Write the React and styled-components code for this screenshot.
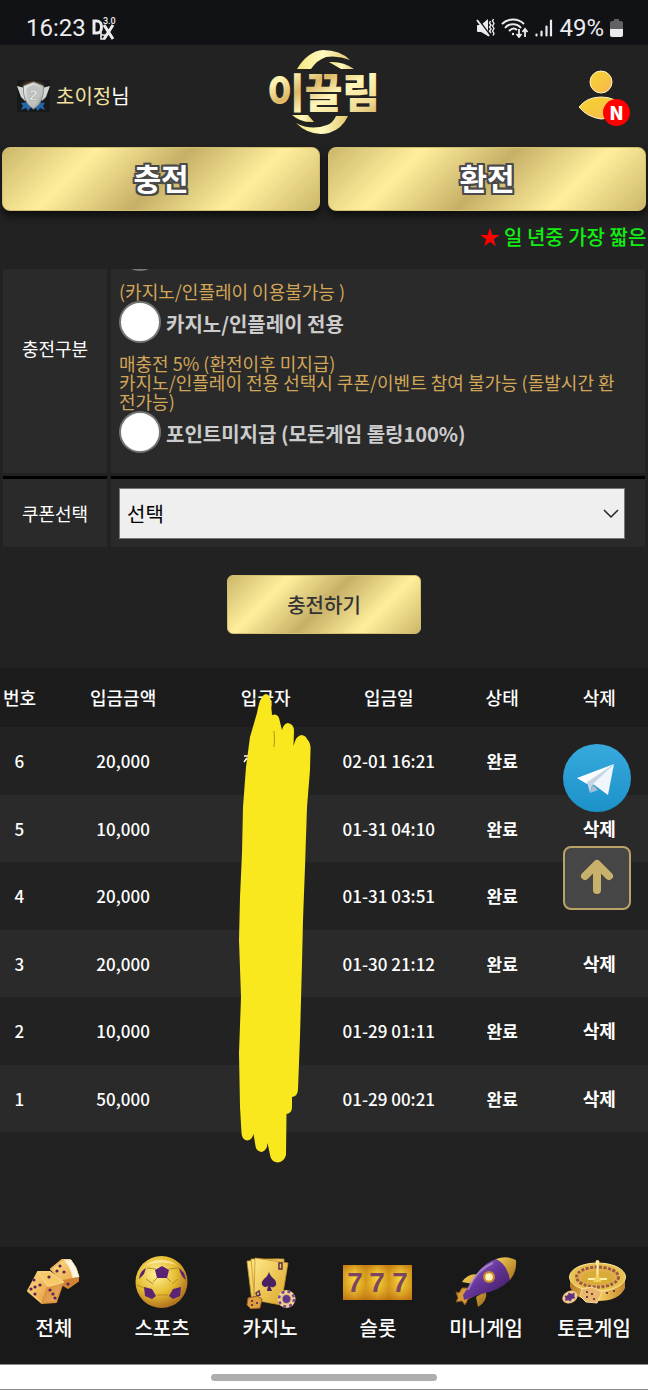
import React from "react";
import styled, { createGlobalStyle, css } from "styled-components";

const GlobalStyle = createGlobalStyle`
  *, *::before, *::after { box-sizing: border-box; }
  body {
    margin: 0;
    background: #222222;
    color: #ffffff;
    font-family: "Noto Sans CJK KR", sans-serif;
    font-size: 18px;
  }
  button, select, input { font-family: inherit; }
`;

const goldFill = css`
  background: linear-gradient(135deg, #cbb76a 0%, #ffef9c 25%, #c6b067 50%, #ffef9c 75%, #cbb76a 100%);
  border: 1px solid #d3bf72;
`;

const Screen = styled.div`
  min-height: 100vh;
  display: flex;
  flex-direction: column;
  overflow-x: hidden;
`;

/* ---------- phone status bar ---------- */

const StatusBar = styled.div`
  height: 45px;
  padding: 10px 25px 0 26px;
  display: flex;
  align-items: center;
  justify-content: space-between;
  background: #111216;
  color: #ececee;
  font-family: Roboto, sans-serif;
  font-size: 24px;
  line-height: 28px;
`;

const StatusGroup = styled.div`
  display: flex;
  align-items: center;
  gap: ${(p) => p.$gap}px;
`;

/* ---------- header ---------- */

const Header = styled.header`
  height: 102px;
  padding: 0 18px 0 16px;
  display: grid;
  grid-template-columns: 1fr auto 1fr;
  align-items: center;
`;

const Member = styled.div`
  display: flex;
  align-items: center;
  gap: 5px;
  font-size: 20px;
  line-height: 30px;
`;

const MemberName = styled.span`
  color: #f3e3a0;
`;

const LogoLink = styled.a`
  display: block;
  height: 92px;
`;

const ProfileButton = styled.button`
  position: relative;
  justify-self: end;
  width: 52px;
  height: 60px;
  padding: 0;
  border: 0;
  background: none;
`;

const NewBadge = styled.span`
  position: absolute;
  right: 0;
  bottom: 0;
  width: 27px;
  height: 27px;
  border-radius: 50%;
  background: #ff0000;
  color: #ffffff;
  font-size: 19px;
  font-weight: 900;
  line-height: 26px;
  text-align: center;
`;

/* ---------- main actions ---------- */

const ActionTabs = styled.nav`
  display: grid;
  grid-template-columns: 1fr 1fr;
  gap: 8px;
  padding: 0 2px;
`;

const ActionTab = styled.button`
  ${goldFill}
  height: 64px;
  padding: 0 0 4px;
  border-radius: 8px;
  box-shadow: 0 5px 8px rgba(0, 0, 0, 0.6);
  color: #ffffff;
  font-size: 30px;
  font-weight: 700;
  line-height: 44px;
  text-shadow: -2px -2px 0 #4a4a4a, 0 -2px 0 #4a4a4a, 2px -2px 0 #4a4a4a, -2px 0 0 #4a4a4a,
    2px 0 0 #4a4a4a, -2px 2px 0 #4a4a4a, 0 2px 0 #4a4a4a, 2px 2px 0 #4a4a4a;
`;

const Ticker = styled.div`
  height: 58px;
  padding: 0 0 6px 74%;
  display: flex;
  align-items: center;
  overflow: hidden;
  color: #12ee12;
  font-size: 20px;
  font-weight: 500;
  line-height: 30px;
  white-space: pre;
`;

const Star = styled.span`
  color: #ff0000;
`;

/* ---------- charge form ---------- */

const FormViewport = styled.div`
  overflow: hidden;
  padding: 0 3px;
`;

/* The form is scrolled so that its first option is cut by the viewport. */
const FormRows = styled.div`
  margin-top: -46px;
  display: grid;
  grid-template-columns: 104px 1fr;
  gap: 3px 4px;
`;

const FormLabel = styled.div`
  display: flex;
  align-items: center;
  justify-content: center;
  background: #2a2a2a;
  border-top: ${(p) => (p.$divided ? "3px solid #000000" : "0")};
  line-height: 26px;
`;

const FormField = styled.div`
  padding: ${(p) => (p.$divided ? "9px 20px 8px 8px" : "6px 20px 20px 8px")};
  background: #2a2a2a;
  border-top: ${(p) => (p.$divided ? "3px solid #000000" : "0")};
`;

const Option = styled.label`
  height: 42px;
  display: flex;
  align-items: center;
  gap: 5px;
  color: #cccccc;
  font-size: 20px;
  font-weight: 700;
  line-height: 30px;
`;

const OptionText = styled.span`
  padding-top: 4px;
`;

const Radio = styled.input`
  appearance: none;
  width: 42px;
  height: 42px;
  margin: 0;
  flex: none;
  border: 2px solid #767676;
  border-radius: 50%;
  background: #ffffff;
`;

const OptionNote = styled.p`
  margin: 11px 0 0;
  color: #d2a659;
  font-size: 18px;
  line-height: 19px;
  word-break: break-all;
`;

const SelectBox = styled.div`
  position: relative;
`;

const Select = styled.select`
  appearance: none;
  display: block;
  width: 100%;
  height: 51px;
  padding: 0 36px 0 7px;
  border: 1px solid #767676;
  border-radius: 0;
  background: #efefef;
  color: #000000;
  font-size: 20px;
  line-height: 30px;
`;

const SelectArrow = styled.svg`
  position: absolute;
  right: 6px;
  top: 20px;
  pointer-events: none;
`;

const SubmitButton = styled.button`
  ${goldFill}
  display: block;
  width: 194px;
  height: 59px;
  margin: 28px auto 34px;
  padding: 0;
  border-radius: 6px;
  color: #333333;
  font-size: 20px;
  font-weight: 500;
  line-height: 30px;
`;

/* ---------- deposit history ---------- */

const History = styled.section`
  position: relative;
  flex: 1;
  padding-bottom: 24px;
`;

const HistoryTable = styled.table`
  width: 100%;
  table-layout: fixed;
  border-collapse: collapse;
  font-size: 18px;
  line-height: 26px;
  text-align: center;
`;

const HeadCell = styled.th`
  width: ${(p) => p.$width};
  height: 59px;
  padding: 0 0 2px;
  background: #1c1c1c;
  font-weight: 500;
  white-space: nowrap;
`;

const HistoryRow = styled.tr`
  height: 68px;
  background: #222222;
  &:nth-child(even) {
    height: 67px;
    background: #2a2a2a;
  }
`;

const Cell = styled.td`
  padding: 0;
  font-weight: ${(p) => (p.$strong ? 700 : 500)};
  font-size: ${(p) => (p.$number ? 17 : 18)}px;
  white-space: nowrap;
`;

const DeleteButton = styled.button`
  padding: 0 0 2px;
  border: 0;
  background: none;
  color: inherit;
  font-size: 18px;
  font-weight: 700;
  line-height: 26px;
`;

const Scribble = styled.svg`
  position: absolute;
  top: 24px;
  left: 36%;
  pointer-events: none;
`;

const FloatingTools = styled.div`
  position: absolute;
  top: 76px;
  right: 17px;
  display: flex;
  flex-direction: column;
  gap: 34px;
`;

const TelegramLink = styled.a`
  display: block;
  height: 68px;
`;

const TopButton = styled.button`
  width: 68px;
  height: 64px;
  padding: 0 0 3px;
  display: flex;
  align-items: center;
  justify-content: center;
  border: 2px solid #b9a465;
  border-radius: 8px;
  background: #464646;
`;

/* ---------- bottom navigation ---------- */

const BottomNav = styled.nav`
  height: 117px;
  padding-top: 8px;
  display: grid;
  grid-template-columns: repeat(6, 1fr);
  background: #191919;
`;

const NavItem = styled.a`
  display: flex;
  flex-direction: column;
  align-items: center;
  gap: 4px;
  color: #ffffff;
  font-size: 20px;
  font-weight: 500;
  line-height: 30px;
  text-decoration: none;
  white-space: nowrap;
`;

const GestureBar = styled.div`
  height: 26px;
  display: flex;
  align-items: center;
  justify-content: center;
  border-top: 1px solid #8a8a8a;
  border-bottom: 1px solid #8a8a8a;
  background: #ffffff;
`;

const GestureHandle = styled.div`
  width: 35%;
  height: 7px;
  border-radius: 4px;
  background: #aeaeae;
`;

/* ---------- drawings ---------- */

function DexIcon() {
  return (
    <svg width="26" height="24" viewBox="0 0 26 24" fill="none" stroke="#ececee">
      <path d="M3 5v12h3c6 0 6-12 0-12z" strokeWidth="3" />
      <path d="M13 9l9 14M22 9l-9 14" strokeWidth="3" />
      <path d="M10 16v7h4M10 19h4" strokeWidth="1.6" />
      <text x="12" y="8" fontSize="9" fontWeight="500" fill="#ececee" stroke="none" fontFamily="Roboto, sans-serif">3.0</text>
    </svg>
  );
}

function MuteIcon() {
  return (
    <svg width="19" height="20" viewBox="0 0 19 20">
      <path d="M1 8q0-1 1-1h3l7-6v17l-7-4H2q-1 0-1-1z" fill="#ececee" />
      <path d="M2 1l12 16" stroke="#111216" strokeWidth="1.500" />
      <path d="M1 2l12 16" stroke="#ececee" strokeWidth="1.800" />
      <path d="M14.500 3l-1 2 1.500 2-1.500 2 1.500 2-1.500 2 1.500 2M17.500 1l-1 2 1.500 2.500-1.500 2.500 1.500 2.500-1.500 2.500 1.500 2.500-1 2" fill="none" stroke="#ececee" strokeWidth="1.400" />
    </svg>
  );
}

function WifiIcon() {
  return (
    <svg width="28" height="20" viewBox="0 0 28 20" fill="none" stroke="#ececee" strokeWidth="2">
      <path d="M1 6c6-6 16-6 22 0M4 10c4-5 12-5 16 0M8 13c3-3 6-3 8-1" />
      <circle cx="12" cy="16" r="1.200" fill="#ececee" stroke="none" />
      <path d="M18 11v8M15.500 16l2.500 3 2.500-3M24 19v-8M21.500 14l2.500-3 2.500 3" strokeWidth="1.800" />
    </svg>
  );
}

function SignalIcon() {
  return (
    <svg width="18" height="18" viewBox="0 0 18 18" stroke="#ececee" strokeWidth="2.200" strokeLinecap="round">
      <path d="M1.500 16.500v-1M6.500 16.500v-4M11.500 16.500v-9M16 16.500v-15" />
    </svg>
  );
}

function BatteryIcon() {
  return (
    <svg width="13" height="20" viewBox="0 0 13 20">
      <path d="M4 1h5v2h2q2 0 2 2v6H0V5q0-2 2-2h2z" fill="#626266" />
      <path d="M0 11h13v6q0 2-2 2H2q-2 0-2-2z" fill="#ececee" />
    </svg>
  );
}

function RankShield() {
  return (
    <svg width="35" height="34" viewBox="0 0 35 34">
      <defs>
        <radialGradient id="glow">
          <stop offset="0" stopColor="#8a5a26" />
          <stop offset="1" stopColor="#18191a" />
        </radialGradient>
        <linearGradient id="steel" x2="1" y2="1">
          <stop offset="0" stopColor="#f0f0ec" />
          <stop offset="1" stopColor="#9da2a2" />
        </linearGradient>
      </defs>
      <rect x="1" y="1" width="33" height="32" fill="#18191a" />
      <ellipse cx="17" cy="6" rx="13" ry="5" fill="url(#glow)" />
      <path d="M5 24l7-1 4 4-4 5-2-3-5 2 2-4zM29 24l-7-1-4 4 4 5 2-3 5 2-2-4z" fill="#2467a8" />
      <path d="M1 7l8 2v13l-4-4zM34 7l-8 2v13l4-4z" fill="#d3d5d3" />
      <path d="M17.500 3l10 4q1 16-10 23Q6 23 7.500 7z" fill="url(#steel)" stroke="#8a8f90" />
      <path d="M17.500 6l7 3q0 12-7 18-8-6-7-18z" fill="#c2c3c0" />
      <text x="17.500" y="21" textAnchor="middle" fontSize="15" fontWeight="700" fill="#f0f0ee" stroke="#a0a3a2" strokeWidth=".5" fontFamily="Liberation Sans, sans-serif">2</text>
    </svg>
  );
}

function Logo() {
  return (
    <svg width="113" height="92" viewBox="0 0 113 92" overflow="visible">
      <defs>
        <linearGradient id="logoGold" x1="0" y1="0" x2="1" y2="1">
          <stop offset="0" stopColor="#f3cf73" />
          <stop offset=".22" stopColor="#fff3b4" />
          <stop offset=".4" stopColor="#dcb765" />
          <stop offset=".58" stopColor="#fff6b8" />
          <stop offset=".8" stopColor="#f1dc94" />
          <stop offset="1" stopColor="#cfa45c" />
        </linearGradient>
        <linearGradient id="ringGold">
          <stop offset="0" stopColor="#f6e77e" />
          <stop offset=".5" stopColor="#fffac0" />
          <stop offset="1" stopColor="#e2c76c" />
        </linearGradient>
      </defs>
      <g fill="url(#ringGold)">
        <path d="M30 19Q41 1 56 0q17 0 27 10Q71 5 59 7 50 10 44 19z" />
        <path d="M62 12q14-1 25 7H74z" />
        <path d="M25 65h16l6 7q-13 1-22-7z" />
        <path d="M29 73q15 8 31 2 6-2 9-9h12Q75 79 62 83 43 87 29 73z" />
      </g>
      <text x="56.500" y="58" textAnchor="middle" fontSize="41" fontWeight="900" fill="url(#logoGold)" stroke="#222222" strokeWidth="2" paintOrder="stroke" fontFamily="Noto Sans CJK KR, sans-serif">이끌림</text>
    </svg>
  );
}

function ProfileIcon() {
  return (
    <svg width="52" height="60" viewBox="0 0 52 60">
      <defs>
        <linearGradient id="person" x2="1" y2="1">
          <stop offset="0" stopColor="#f4d62e" />
          <stop offset="1" stopColor="#fbb551" />
        </linearGradient>
      </defs>
      <g fill="url(#person)" stroke="#fff3cc" strokeWidth="1">
        <circle cx="23" cy="16" r="11" />
        <path d="M1 41q8-10 22-10 15 0 21 10-9 12-21 12Q9 51 1 41z" />
      </g>
    </svg>
  );
}

function TelegramIcon() {
  return (
    <svg width="68" height="68" viewBox="0 0 68 68">
      <defs>
        <linearGradient id="tg" x2="0" y2="1">
          <stop offset="0" stopColor="#37a9dd" />
          <stop offset="1" stopColor="#1c92c9" />
        </linearGradient>
      </defs>
      <circle cx="34" cy="34" r="34" fill="url(#tg)" />
      <path d="M14 34l37-14-27 20z" fill="#ffffff" />
      <path d="M24 38l27-18-22 22-2 7z" fill="#c5d5e6" />
      <path d="M27 49l3-8 5 5z" fill="#a9bed3" />
      <path d="M51 20l-6 31-15-11z" fill="#f1f6fc" />
    </svg>
  );
}

function ArrowUp() {
  return (
    <svg width="34" height="36" viewBox="0 0 34 36" fill="none" stroke="#c8b26b" strokeWidth="8" strokeLinecap="round" strokeLinejoin="round">
      <path d="M17 31V6M5 17L17 5l12 12" />
    </svg>
  );
}

function NameScribble() {
  return (
    <Scribble width="80" height="474" viewBox="233 692 80 474">
      <path d="M244 756h5M247 758l-3 4" stroke="#ffffff" strokeWidth="1.500" />
      <path
        fill="#f9e81d"
        d="M266 694Q271 695 271 704L272 715Q277 713 279 718L282 730Q284 723 288 723Q294 724 294 731L293.500 746Q296 735 302 735Q306 736 307 739Q311 743 310.500 750L310 770 307 807 305 867 303 920 302 963 300 1037 298 1089Q298 1096 292 1097V1107Q292 1113 286.500 1114L286 1155Q284 1162 278 1162.500Q272 1162 270.500 1157L267.500 1143Q267 1151 261.500 1152Q256 1151 255.500 1146L253.500 1134Q252 1140 247 1140.500Q242 1140 241.500 1133L240 1107 239 1053 241 997 239 940 240 897 242 853 243 807 246 767 250 737 257 713Q260 695 266 694z"
      />
      <path d="M274 731q1 8 0 16" stroke="#a89c14" fill="none" />
    </Scribble>
  );
}

function Dots({ points, r = 1.6 }) {
  return points.map(([x, y]) => <circle key={`${x}-${y}`} cx={x} cy={y} r={r} fill="#5c2553" />);
}

function DiceIcon() {
  return (
    <svg width="72" height="54" viewBox="0 0 72 54">
      <defs>
        <linearGradient id="dieLight" x2="1" y2="1">
          <stop offset="0" stopColor="#ffe08a" />
          <stop offset="1" stopColor="#e79b3c" />
        </linearGradient>
        <linearGradient id="dieDark" x2="1" y2="1">
          <stop offset="0" stopColor="#d98a2f" />
          <stop offset="1" stopColor="#e9b26a" />
        </linearGradient>
      </defs>
      <g strokeLinejoin="round" strokeWidth="2">
        <path d="M33 14L44 5h8l8 18-10 9-6-6z" fill="url(#dieLight)" stroke="#efba5a" />
        <path d="M46 5h7q6 7 8 17l-6 2q-2-12-9-19z" fill="#fdf4e0" stroke="#f6e3bd" strokeWidth="1" />
        <path d="M45 26l15-3v3l-10 7-5-3z" fill="#d08432" stroke="#d08432" />
        <path d="M20 17L10 36l14 12 6-17z" fill="url(#dieLight)" stroke="#f4c76b" />
        <path d="M30 31l15-4-7 20-14 1z" fill="url(#dieDark)" stroke="#dd9440" />
        <path d="M20 17h12l13 10-15 4z" fill="#f6c866" stroke="#f6d07a" />
      </g>
      <Dots points={[[16, 25], [22, 30], [13, 34], [17, 39], [17, 32], [32, 35], [35, 39], [37, 43], [31, 22], [42, 11], [46, 17], [39, 16], [50, 29]]} />
    </svg>
  );
}

function BallIcon() {
  return (
    <svg width="72" height="54" viewBox="0 0 72 54">
      <defs>
        <radialGradient id="ball" cx=".4" cy=".35" r=".7">
          <stop offset="0" stopColor="#fff19a" />
          <stop offset=".55" stopColor="#e5bd30" />
          <stop offset="1" stopColor="#a9661f" />
        </radialGradient>
      </defs>
      <circle cx="35.500" cy="27" r="26" fill="url(#ball)" />
      <path d="M31 23l-4 4M41 23l4 4M31 40h11M27 29l-7-5M46 29l6-5M30 14l-9-1M43 14l10-1M18 33l-7-3M54 33l6-3" stroke="#b98b26" fill="none" />
      <path d="M36 11l7 4-2 8H31l-2-8zM18 32l8 2 4 7-4 3-7-3zM55 32l-8 2-4 7 4 3 7-3zM20 13l-2 6-5 5q1-8 7-11zM53 13l5 5 2 7q-5-3-7-12z" fill="#5a2374" />
      <path d="M20 10q15-10 31 0-15-5-31 0z" fill="#fff8cf" opacity=".6" />
    </svg>
  );
}

function CardsIcon() {
  return (
    <svg width="72" height="54" viewBox="0 0 72 54">
      <defs>
        <linearGradient id="card" x2="1" y2="1">
          <stop offset="0" stopColor="#ffe888" />
          <stop offset="1" stopColor="#d9a526" />
        </linearGradient>
      </defs>
      <g fill="url(#card)" stroke="#c7942f" strokeWidth=".8">
        <path d="M13 6l32-2 3 38-30 5z" />
        <path d="M17 4h33l-2 42H21z" />
        <path d="M21 3l33 5-7 42-27-5z" />
      </g>
      <path d="M35 17q1 4 6 8 3 5-1 7-3 1-4-1l2 5h-5l1-5q-3 2-5 0-3-3 1-7 4-3 5-7z" fill="#482064" />
      <path d="M45 8h3v6h-3zM22 38l3-2 1 4-3 1z" fill="none" stroke="#5a2f50" strokeWidth="1.500" />
      <path d="M14 43l9-2 5 3-2 9-9 1-4-4z" fill="#dda03f" stroke="#9c5a22" />
      <Dots points={[[18, 46], [23, 48], [18, 50]]} r={1.1} />
      <circle cx="52.500" cy="44" r="9" fill="#f1d391" />
      <circle cx="52.500" cy="44" r="7.500" fill="none" stroke="#75439a" strokeWidth="2.500" strokeDasharray="3 3" />
      <circle cx="52.500" cy="44" r="4.500" fill="#5f368f" stroke="#e6bd74" />
    </svg>
  );
}

function SlotIcon() {
  return (
    <svg width="72" height="54" viewBox="0 0 72 54">
      <defs>
        <linearGradient id="reel">
          <stop offset="0" stopColor="#d0901a" />
          <stop offset=".5" stopColor="#f8d83c" />
          <stop offset="1" stopColor="#cd8c18" />
        </linearGradient>
        <linearGradient id="reelShade" x2="0" y2="1">
          <stop offset="0" stopColor="#b8650c" stopOpacity=".6" />
          <stop offset=".4" stopColor="#f5d030" stopOpacity=".1" />
          <stop offset="1" stopColor="#b8650c" stopOpacity=".75" />
        </linearGradient>
      </defs>
      {[1, 24, 47].map((x) => (
        <rect key={x} x={x} y="10" width="23" height="35" fill="url(#reel)" />
      ))}
      <rect x="1" y="10" width="69" height="35" fill="url(#reelShade)" />
      {[13, 35, 58].map((x) => (
        <text key={x} x={x} y="37" textAnchor="middle" fontSize="28" fontWeight="700" fill="#7c4560" fontFamily="Liberation Sans, sans-serif">7</text>
      ))}
    </svg>
  );
}

function RocketIcon() {
  return (
    <svg width="72" height="54" viewBox="0 0 72 54">
      <defs>
        <linearGradient id="hull" x2="1" y2="1">
          <stop offset="0" stopColor="#a779cf" />
          <stop offset=".45" stopColor="#67369b" />
          <stop offset="1" stopColor="#371858" />
        </linearGradient>
        <linearGradient id="nose" x2="1" y2="1">
          <stop offset="0" stopColor="#f3cf55" />
          <stop offset="1" stopColor="#a56d1b" />
        </linearGradient>
      </defs>
      <path d="M29 20q-10-3-17 7l11 2zM36 36q2 10-8 16l-2-10z" fill="url(#nose)" />
      <path d="M12 33l-3 5-3-1 2 6-2 4 6-1 3 4 3-6 6-3-6-8z" fill="#d59a35" stroke="#885420" />
      <path d="M46 4q12-1 15 20Q50 36 31 39L14 45l-1-5 8-12Q31 9 46 4z" fill="url(#hull)" />
      <path d="M46 4q11-4 20 1 1 12-6 20-3-16-14-21z" fill="url(#nose)" />
      <path d="M18 35q8-20 25-27" stroke="#c6a2e0" strokeWidth="2" fill="none" opacity=".6" />
      <circle cx="39" cy="22" r="6" fill="#c88b2d" />
      <circle cx="39" cy="22" r="3.800" fill="#fff2bb" />
    </svg>
  );
}

function RouletteIcon() {
  return (
    <svg width="72" height="54" viewBox="0 0 72 54">
      <defs>
        <linearGradient id="wheel">
          <stop offset="0" stopColor="#b77a23" />
          <stop offset=".5" stopColor="#f5d263" />
          <stop offset="1" stopColor="#c58a2d" />
        </linearGradient>
      </defs>
      <path d="M12 22v10q6 14 28 14 21 0 27-13V22z" fill="url(#wheel)" />
      <ellipse cx="39.500" cy="22" rx="28" ry="14" fill="#e9c150" stroke="#fbe59a" />
      <ellipse cx="39.500" cy="22" rx="21" ry="10" fill="#e1ae4a" stroke="#9b5a48" strokeWidth="3" strokeDasharray="3 1.500" />
      <ellipse cx="39.500" cy="23" rx="16" ry="7" fill="#d9ab38" />
      <path d="M39.500 6v18M30 24h19" stroke="#fff0a8" strokeWidth="2" />
      <circle cx="39.500" cy="7" r="2" fill="#ffe795" />
      <path d="M35 27l4-8 5 8z" fill="#f2d25e" />
      <path d="M24 34l10-2 10 5-5 11-11-1-6-6z" fill="#e9b66b" stroke="#f8dba0" />
      <Dots points={[[29, 37], [34, 39], [29, 42], [36, 44], [49, 38], [56, 36]]} r={1.1} />
      <ellipse cx="12" cy="42" rx="8" ry="6" fill="#edc07a" transform="rotate(-25 12 42)" />
      <ellipse cx="12" cy="42" rx="6" ry="4" fill="#61337f" stroke="#f3d29a" strokeDasharray="3 2" strokeWidth="2" transform="rotate(-25 12 42)" />
    </svg>
  );
}

const records = [
  { no: 6, amount: "20,000", date: "02-01 16:21" },
  { no: 5, amount: "10,000", date: "01-31 04:10" },
  { no: 4, amount: "20,000", date: "01-31 03:51" },
  { no: 3, amount: "20,000", date: "01-30 21:12" },
  { no: 2, amount: "10,000", date: "01-29 01:11" },
  { no: 1, amount: "50,000", date: "01-29 00:21" },
];

const columns = [
  ["번호", "6%"],
  ["입금금액", "26%"],
  ["입금자", "18%"],
  ["입금일", "20%"],
  ["상태", "15%"],
  ["삭제", "15%"],
];

const navItems = [
  ["전체", DiceIcon],
  ["스포츠", BallIcon],
  ["카지노", CardsIcon],
  ["슬롯", SlotIcon],
  ["미니게임", RocketIcon],
  ["토큰게임", RouletteIcon],
];

export default function App() {
  return (
    <Screen>
      <GlobalStyle />
      <StatusBar>
        <StatusGroup $gap={5}>
          <span>16:23</span>
          <DexIcon />
        </StatusGroup>
        <StatusGroup $gap={6}>
          <MuteIcon />
          <WifiIcon />
          <SignalIcon />
          <span>49%</span>
          <BatteryIcon />
        </StatusGroup>
      </StatusBar>

      <Header>
        <Member>
          <RankShield />
          <span>
            <MemberName>초이정</MemberName>님
          </span>
        </Member>
        <LogoLink href="#">
          <Logo />
        </LogoLink>
        <ProfileButton type="button">
          <ProfileIcon />
          <NewBadge>N</NewBadge>
        </ProfileButton>
      </Header>

      <ActionTabs>
        <ActionTab type="button">충전</ActionTab>
        <ActionTab type="button">환전</ActionTab>
      </ActionTabs>

      <Ticker>
        <Star>★</Star> 일 년중 가장 짧은
      </Ticker>

      <FormViewport>
        <FormRows>
          <FormLabel id="charge-type">충전구분</FormLabel>
          <FormField role="radiogroup" aria-labelledby="charge-type">
            <Option>
              <Radio type="radio" name="charge" aria-labelledby="sports-note" />
            </Option>
            <OptionNote id="sports-note">(카지노/인플레이 이용불가능 )</OptionNote>
            <Option>
              <Radio type="radio" name="charge" />
              <OptionText>카지노/인플레이 전용</OptionText>
            </Option>
            <OptionNote>
              매충전 5% (환전이후 미지급)
              <br />
              카지노/인플레이 전용 선택시 쿠폰/이벤트 참여 불가능 (돌발시간 환전가능)
            </OptionNote>
            <Option>
              <Radio type="radio" name="charge" />
              <OptionText>포인트미지급 (모든게임 롤링100%)</OptionText>
            </Option>
          </FormField>

          <FormLabel as="label" htmlFor="coupon" $divided>
            쿠폰선택
          </FormLabel>
          <FormField $divided>
            <SelectBox>
              <Select id="coupon" defaultValue="none">
                <option value="none">선택</option>
              </Select>
              <SelectArrow width="16" height="11" viewBox="0 0 16 11" fill="none" stroke="#222222" strokeWidth="1.500">
                <path d="M1 2l7 7 7-7" />
              </SelectArrow>
            </SelectBox>
          </FormField>
        </FormRows>
      </FormViewport>

      <SubmitButton type="submit">충전하기</SubmitButton>

      <History>
        <HistoryTable>
          <thead>
            <tr>
              {columns.map(([label, width]) => (
                <HeadCell key={label} $width={width} scope="col">
                  {label}
                </HeadCell>
              ))}
            </tr>
          </thead>
          <tbody>
            {records.map((r) => (
              <HistoryRow key={r.no}>
                <Cell $number>{r.no}</Cell>
                <Cell $number>{r.amount}</Cell>
                <Cell />
                <Cell $number>{r.date}</Cell>
                <Cell $strong $number>완료</Cell>
                <Cell $strong>
                  <DeleteButton type="button">삭제</DeleteButton>
                </Cell>
              </HistoryRow>
            ))}
          </tbody>
        </HistoryTable>
        <NameScribble />
        <FloatingTools>
          <TelegramLink href="#">
            <TelegramIcon />
          </TelegramLink>
          <TopButton type="button">
            <ArrowUp />
          </TopButton>
        </FloatingTools>
      </History>

      <BottomNav>
        {navItems.map(([label, Icon]) => (
          <NavItem key={label} href="#">
            <Icon />
            {label}
          </NavItem>
        ))}
      </BottomNav>
      <GestureBar>
        <GestureHandle />
      </GestureBar>
    </Screen>
  );
}
